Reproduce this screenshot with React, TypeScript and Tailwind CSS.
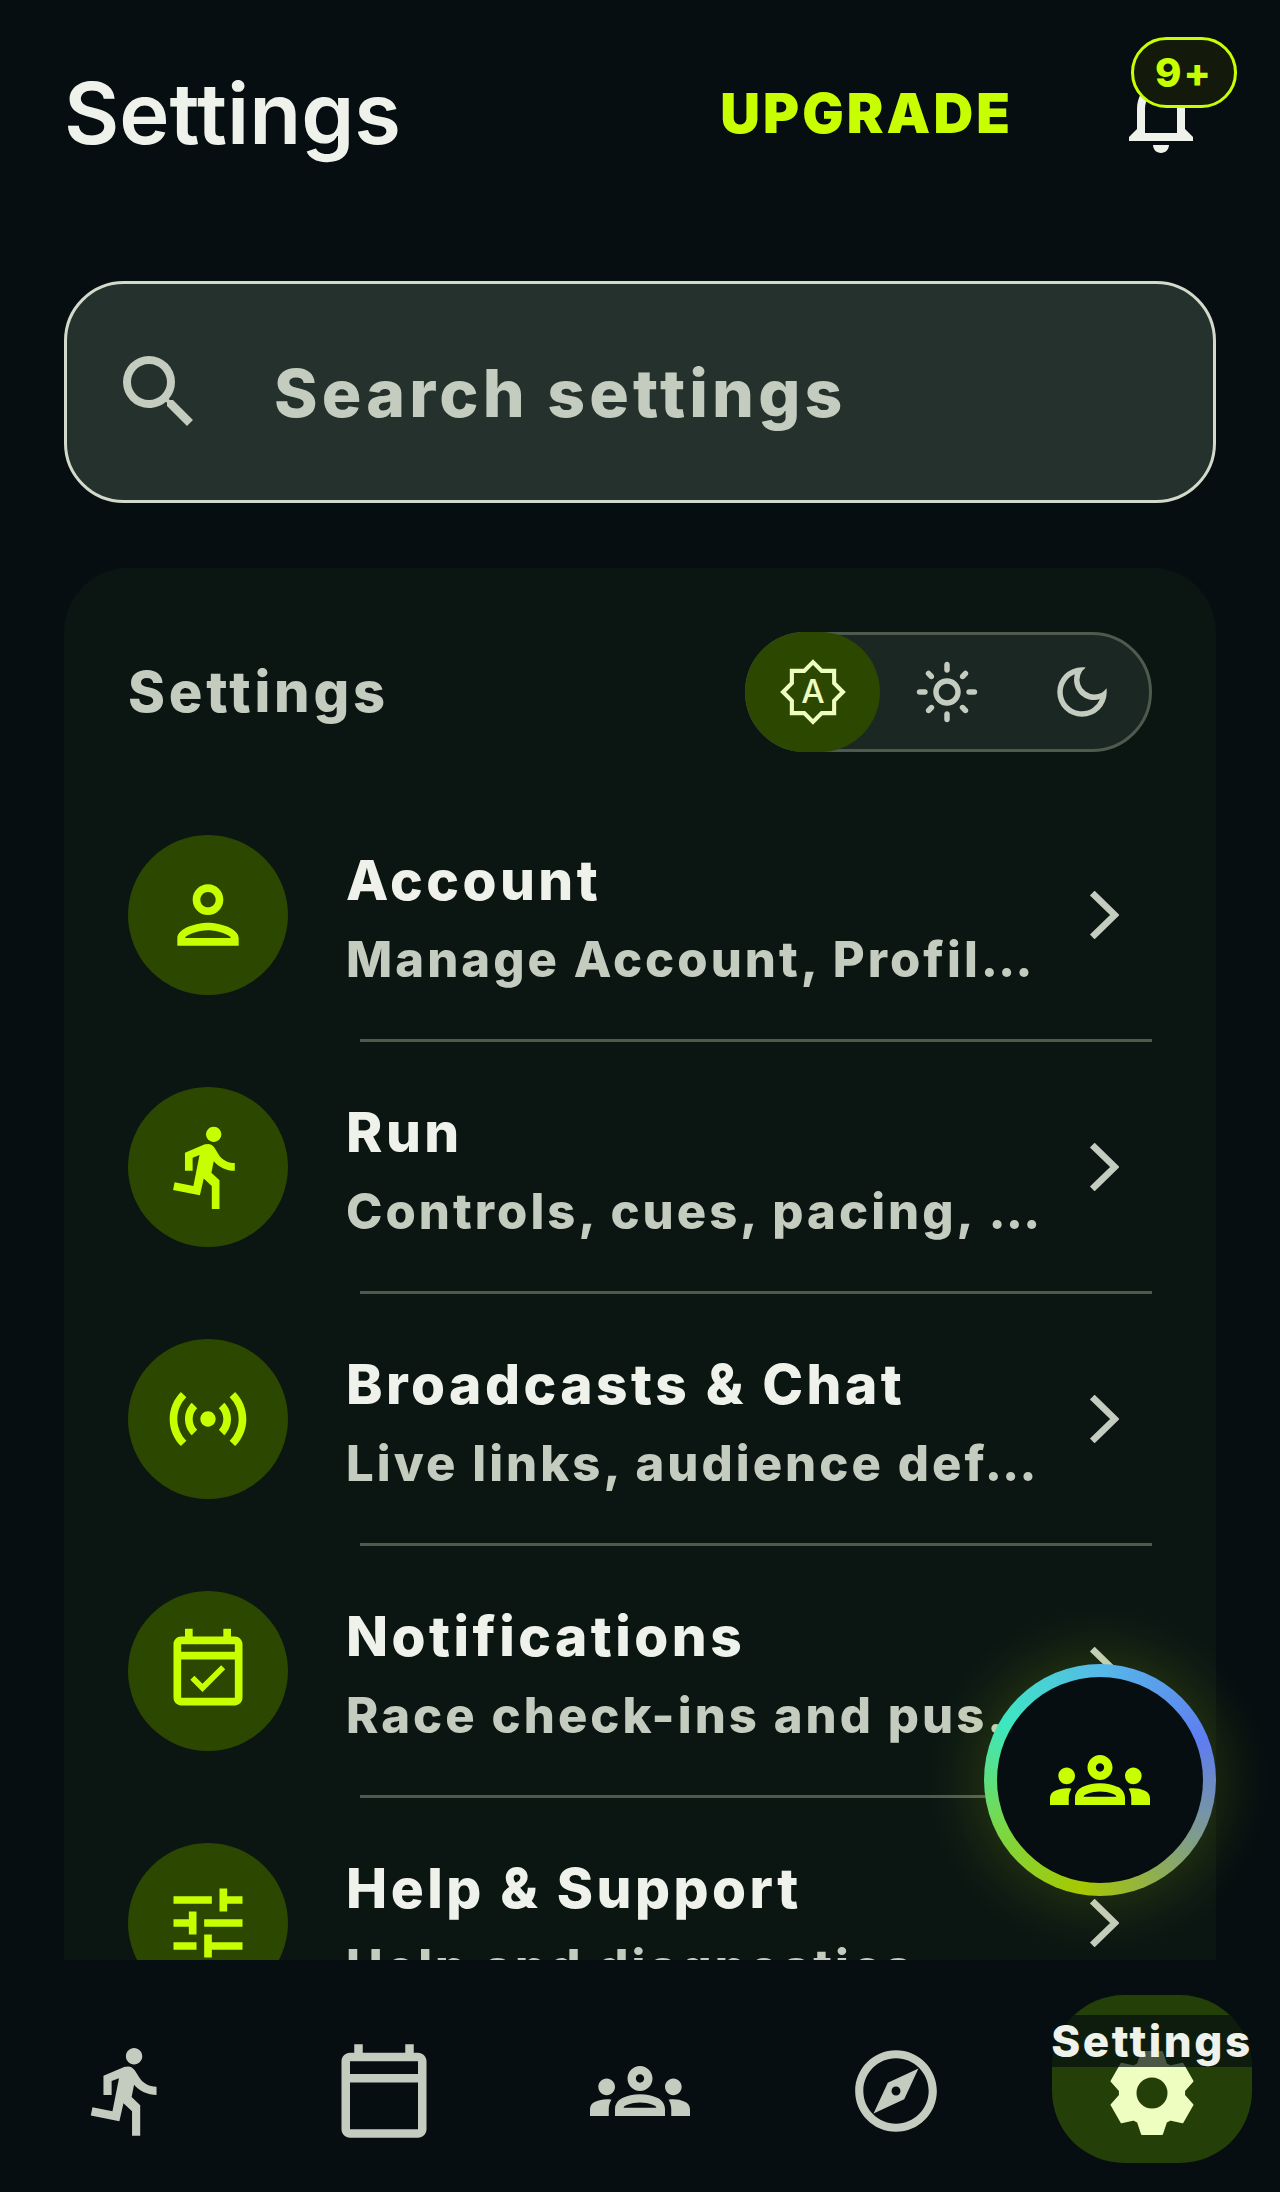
import React from "react";
import {
  MdDirectionsRun,
  MdOutlineCalendarToday,
  MdOutlineDarkMode,
  MdOutlineEventAvailable,
  MdOutlineExplore,
  MdOutlineGroups,
  MdOutlineLightMode,
  MdOutlineNotifications,
  MdOutlinePerson,
  MdOutlineSensors,
  MdSearch,
  MdTune,
} from "react-icons/md";

interface RowProps {
  icon: React.ReactNode;
  title: string;
  sub: string;
}

const SettingsRow: React.FC<RowProps> = ({ icon, title, sub }) => {
  return (
    <div className="flex flex-col h-[252px] shrink-0">
      <div className="flex items-center flex-1 min-h-0">
        <div className="w-[160px] h-[160px] rounded-full bg-[#2c4700] text-[#c8ff00] flex items-center justify-center shrink-0">
          {icon}
        </div>
        <div className="ml-[58px] w-[700px] pt-[9px] flex flex-col">
          <div className="text-[55px] leading-[64px] font-extrabold tracking-[0.063em] text-[#eef2ea] whitespace-nowrap">
            {title}
          </div>
          <div className="mt-[18px] text-[49px] leading-[60px] font-extrabold tracking-[0.062em] text-[#c4cbbf] whitespace-nowrap overflow-hidden">
            {sub}
          </div>
        </div>
        <svg viewBox="0 0 29 47" className="ml-auto mr-[33px] w-[30px] h-[48px] text-[#c4cbbf]">
          <polyline points="3,2 25,23.5 3,45" fill="none" stroke="currentColor" strokeWidth="6.5" />
        </svg>
      </div>
      <div className="h-[3px] ml-[232px] bg-[#4f5a4e] shrink-0" />
    </div>
  );
};

const AutoIcon = () => (
  <svg viewBox="0 0 64 64" className="w-[66px] h-[66px]">
    <polygon
      points="32,3 40.5,11.5 52.5,11.5 52.5,23.5 61,32 52.5,40.5 52.5,52.5 40.5,52.5 32,61 23.5,52.5 11.5,52.5 11.5,40.5 3,32 11.5,23.5 11.5,11.5 23.5,11.5"
      fill="none"
      stroke="currentColor"
      strokeWidth="4"
    />
    <text x="32" y="43" textAnchor="middle" fontSize="32" fontWeight="500" fill="currentColor" fontFamily="Inter, sans-serif">
      A
    </text>
  </svg>
);

// six blocky teeth, same as the active tab in the nav
const GearIcon = () => {
  const tooth = [
    [-14, -29],
    [-10, -41],
    [10, -41],
    [14, -29],
  ];
  const points: string[] = [];
  for (let i = 0; i < 6; i++) {
    const a = (i * Math.PI) / 3;
    for (const [x, y] of tooth) {
      const px = 42 + x * Math.cos(a) - y * Math.sin(a);
      const py = 42 + x * Math.sin(a) + y * Math.cos(a);
      points.push(`${px.toFixed(1)},${py.toFixed(1)}`);
    }
  }
  return (
    <svg viewBox="0 0 84 84" className="w-[84px] h-[84px]">
      <polygon points={points.join(" ")} fill="#eefdc0" stroke="#eefdc0" strokeWidth="2" strokeLinejoin="round" />
      <circle cx="42" cy="42" r="15.5" fill="#243f08" />
    </svg>
  );
};

export default function App() {
  return (
    <div className="relative w-[1280px] h-[2192px] overflow-hidden bg-[#060e11] font-[Inter,sans-serif] flex flex-col">
      <header className="relative h-[226px] shrink-0 flex items-center pl-[64px] pr-[71px]">
        <h1 className="text-[85px] leading-none font-semibold text-[#eef2ea]">Settings</h1>
        <div className="ml-auto text-[55px] font-black tracking-[0.056em] text-[#c8ff00]">UPGRADE</div>
        <div className="relative w-[96px] h-[96px] ml-[100px]">
          <MdOutlineNotifications className="text-[#eef2ea]" size={96} />
          <div className="absolute left-[18px] top-[-28px] w-[106px] h-[71px] rounded-full border-[3px] border-[#c8ff00] bg-[#141a0b] flex items-center justify-center text-[40px] font-extrabold text-[#c8ff00] tracking-[0.05em]">
            9+
          </div>
        </div>
      </header>

      <main className="flex-1 min-h-0 flex flex-col px-[64px] pt-[55px]">
        <div className="h-[222px] shrink-0 rounded-[60px] border-[3px] border-[#d3dacb] bg-[#24312c] flex items-center pl-[44px]">
          <MdSearch className="text-[#c4cbbf]" size={96} />
          <span className="ml-[67px] pt-[2px] text-[66px] font-extrabold tracking-[0.063em] text-[#c4cbbf]">Search settings</span>
        </div>

        <section className="mt-[65px] flex-1 min-h-0 overflow-hidden rounded-t-[64px] bg-[#0b1613] px-[64px] pt-[64px]">
          <div className="flex items-center justify-between h-[120px]">
            <div className="text-[56px] font-extrabold tracking-[0.068em] text-[#c4cbbf]">Settings</div>
            <div className="flex items-center h-[120px] w-[407px] rounded-full border-[3px] border-[#4f5a4e] bg-[#1b2723]">
              <div className="ml-[-3px] w-[135px] h-[120px] rounded-full bg-[#2c4700] text-[#eefdc0] flex items-center justify-center shrink-0">
                <AutoIcon />
              </div>
              <div className="w-[136px] flex items-center justify-center text-[#c4cbbf]">
                <MdOutlineLightMode size={66} />
              </div>
              <div className="w-[136px] flex items-center justify-center text-[#c4cbbf]">
                <MdOutlineDarkMode size={66} />
              </div>
            </div>
          </div>

          <div className="mt-[38px] flex flex-col">
            <SettingsRow icon={<MdOutlinePerson size={92} />} title="Account" sub="Manage Account, Profil…" />
            <SettingsRow icon={<MdDirectionsRun size={92} />} title="Run" sub="Controls, cues, pacing, …" />
            <SettingsRow icon={<MdOutlineSensors size={92} />} title="Broadcasts & Chat" sub="Live links, audience def…" />
            <SettingsRow icon={<MdOutlineEventAvailable size={92} />} title="Notifications" sub="Race check-ins and pus…" />
            <SettingsRow icon={<MdTune size={92} />} title="Help & Support" sub="Help and diagnostics" />
          </div>
        </section>
      </main>

      <nav className="relative h-[232px] shrink-0 grid grid-cols-5 items-center text-[#c4cbbf]">
        <div className="flex justify-center pt-[30px]">
          <MdDirectionsRun size={98} />
        </div>
        <div className="flex justify-center pt-[30px]">
          <MdOutlineCalendarToday size={102} />
        </div>
        <div className="flex justify-center pt-[30px]">
          <MdOutlineGroups size={100} />
        </div>
        <div className="flex justify-center pt-[30px]">
          <MdOutlineExplore size={98} />
        </div>
        <div className="relative flex justify-center pt-[6px]">
          <div className="w-[200px] h-[168px] rounded-[72px] bg-[#243f08] flex items-center justify-center pt-[28px]">
            <GearIcon />
          </div>
          <div className="absolute left-[28px] top-[26px] w-[200px] h-[52px] bg-[#060e11]/70 flex items-center justify-center text-[44px] font-extrabold tracking-[0.058em] text-[#eef2ea] whitespace-nowrap">
            Settings
          </div>
        </div>
      </nav>

      <div className="absolute left-[984px] top-[1664px] w-[232px] h-[232px] rounded-full p-[13px] bg-[conic-gradient(from_0deg,#56b9e8,#5f7df0_70deg,#84a27a_130deg,#a6c800_190deg,#7fd63e_240deg,#3de8c0_300deg,#56b9e8)] shadow-[0_0_60px_10px_rgba(200,255,0,0.15)]">
        <div className="w-full h-full rounded-full bg-[#060e11] flex items-center justify-center text-[#c8ff00]">
          <MdOutlineGroups size={100} />
        </div>
      </div>
    </div>
  );
}
